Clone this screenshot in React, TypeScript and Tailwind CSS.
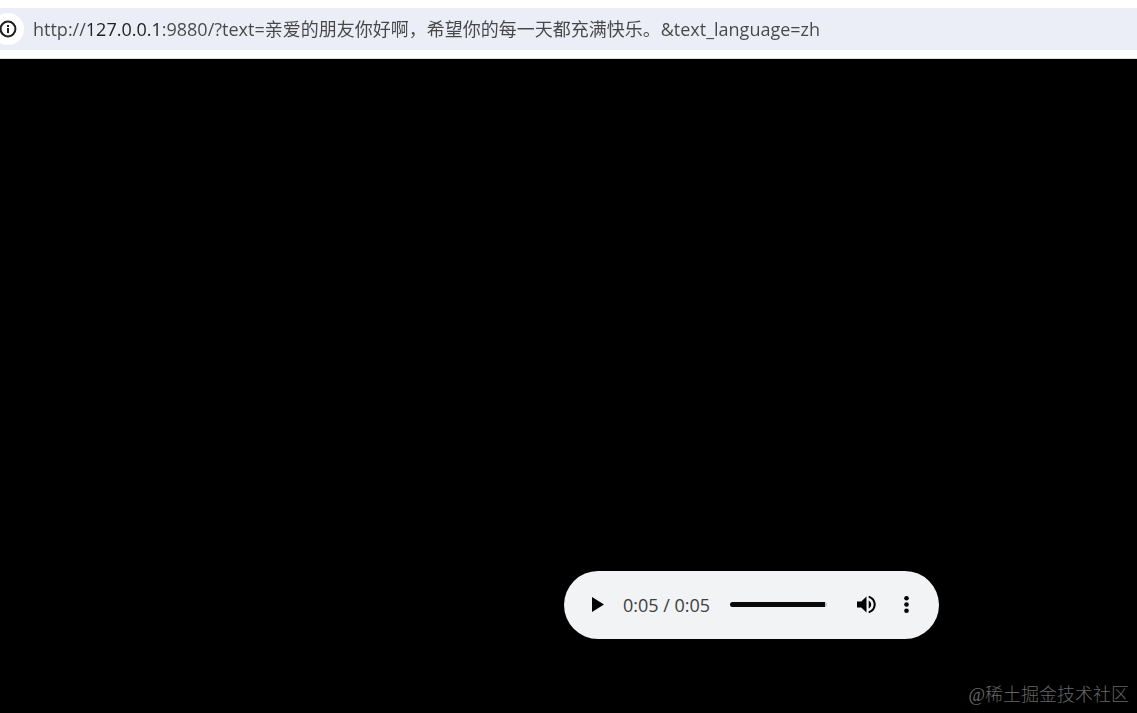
import { useState } from "react";

const PAGE_URL =
  "http://127.0.0.1:9880/?text=亲爱的朋友你好啊，希望你的每一天都充满快乐。&text_language=zh";

function AddressBar() {
  const [url, setUrl] = useState(PAGE_URL);

  return (
    <header className="border-b border-[#dcdde0] bg-white py-2">
      <form
        className="flex h-[42px] items-center bg-[#ebeef7]"
        onSubmit={(e) => e.preventDefault()}
      >
        <button
          type="button"
          aria-label="View site information"
          className="-ml-2 flex size-8 shrink-0 items-center justify-center rounded-full bg-white text-[#1f1f1f]"
        >
          <svg viewBox="0 0 20 20" className="size-5" fill="none">
            <circle cx="10" cy="10" r="7.4" stroke="currentColor" strokeWidth="2" />
            <path d="M9 9h2v5H9zM9 6h2v2H9z" fill="currentColor" />
          </svg>
        </button>
        {/* the host part of the address is darker than the rest */}
        <input
          type="text"
          aria-label="Address"
          spellCheck={false}
          value={url}
          onChange={(e) => setUrl(e.target.value)}
          className="ml-[9px] h-8 min-w-0 flex-1 bg-[linear-gradient(to_right,#474747_53px,#1f1f1f_53px,#1f1f1f_128px,#474747_128px)] bg-clip-text pb-0.5 font-['Open_Sans','Noto_Sans_CJK_SC',sans-serif] text-lg text-transparent outline-none"
        />
      </form>
    </header>
  );
}

function AudioPlayer() {
  const [position, setPosition] = useState(5);

  return (
    <section
      aria-label="Audio player"
      className="flex h-[68px] w-[375px] items-center rounded-full bg-[#f1f3f4] pb-0.5 pl-[18px] pr-4"
    >
      <button
        type="button"
        aria-label="Play"
        className="flex size-8 shrink-0 items-center justify-center"
      >
        <svg viewBox="0 0 24 24" className="size-6" fill="black">
          <path d="M6 5v15l12-7.5z" />
        </svg>
      </button>
      <span className="ml-[9px] w-[107px] shrink-0 whitespace-nowrap pt-0.5 font-['Open_Sans',sans-serif] text-lg text-[#404040]">
        0:05 / 0:05
      </span>
      <input
        type="range"
        aria-label="Seek"
        min={0}
        max={5}
        value={position}
        onChange={(e) => setPosition(Number(e.target.value))}
        className="h-[5px] min-w-0 flex-1 appearance-none rounded-full bg-[linear-gradient(to_right,#0a0a0a_95px,#c4c6c7_95px)] [&::-webkit-slider-thumb]:size-0 [&::-webkit-slider-thumb]:appearance-none"
      />
      <button
        type="button"
        aria-label="Mute"
        className="ml-6 flex size-8 shrink-0 items-center justify-center"
      >
        <svg viewBox="0 0 24 24" className="size-6" fill="black">
          <path d="M2 9.4v6.2h4.2l5.3 5V4.4l-5.3 5H2zm14.2 3.1c0-1.77-1.02-3.29-2.5-4.03v8.05c1.48-.73 2.5-2.25 2.5-4.02zM13.7 3.73v2.06c2.89.86 5 3.54 5 6.71s-2.11 5.85-5 6.71v2.06c4.01-.91 7-4.49 7-8.77s-2.99-7.86-7-8.77z" />
        </svg>
      </button>
      <button
        type="button"
        aria-label="More options"
        className="ml-2 flex size-8 shrink-0 items-center justify-center"
      >
        <svg viewBox="0 0 24 24" className="size-6" fill="black">
          <circle cx="11.5" cy="6.3" r="2.3" />
          <circle cx="11.5" cy="12.5" r="2.3" />
          <circle cx="11.5" cy="18.7" r="2.3" />
        </svg>
      </button>
    </section>
  );
}

export default function App() {
  return (
    <div className="relative flex min-h-screen flex-col bg-black">
      <AddressBar />
      <main className="flex flex-1 items-end justify-end pb-[74px] pr-[198px]">
        <AudioPlayer />
      </main>
      <p className="absolute bottom-1.5 right-2 font-['Liberation_Serif','Noto_Sans_CJK_SC',serif] text-lg/6 font-light text-[#666666]">
        @稀土掘金技术社区
      </p>
    </div>
  );
}
